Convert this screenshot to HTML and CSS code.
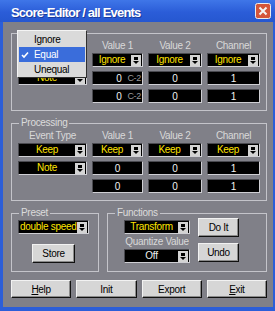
FILE: index.html
```html
<!DOCTYPE html>
<html lang="en">
<head>
    <meta charset="UTF-8">
    <title>Score-Editor / all Events</title>
    <link rel="stylesheet" href="styles.css">
</head>
<body>
<div class="window">

    <!-- Title bar -->
    <div class="titlebar">
        <span class="title">Score-Editor / all Events</span>
        <svg class="close" width="16" height="16" viewBox="0 0 16 16">
            <rect x="0.5" y="0.5" width="15" height="15" rx="2" fill="#d4553a" stroke="#ececec"/>
            <path d="M4.5 4.5 L11.5 11.5 M11.5 4.5 L4.5 11.5" stroke="#f4f4f4" stroke-width="2"/>
        </svg>
    </div>

    <div class="client">

        <!-- Filter (its legend and first column header sit under the open popup) -->
        <div class="group">
            <div class="matrix">
                <div class="cols heads">
                    <span></span>
                    <span>Value 1</span>
                    <span>Value 2</span>
                    <span>Channel</span>
                </div>
                <div class="cols rows">
                    <div class="select"><span class="val"></span><span class="arrow"><svg width="10" height="11" viewBox="0 0 10 11"><rect x="3" y="2" width="4" height="3"/><path d="M2 6 H8 L5 9 Z"/></svg></span></div>
                    <div class="select"><span class="val">Ignore</span><span class="arrow"><svg width="10" height="11" viewBox="0 0 10 11"><rect x="3" y="2" width="4" height="3"/><path d="M2 6 H8 L5 9 Z"/></svg></span></div>
                    <div class="select"><span class="val">Ignore</span><span class="arrow"><svg width="10" height="11" viewBox="0 0 10 11"><rect x="3" y="2" width="4" height="3"/><path d="M2 6 H8 L5 9 Z"/></svg></span></div>
                    <div class="select"><span class="val">Ignore</span><span class="arrow"><svg width="10" height="11" viewBox="0 0 10 11"><rect x="3" y="2" width="4" height="3"/><path d="M2 6 H8 L5 9 Z"/></svg></span></div>

                    <div class="select"><span class="val">Note</span><span class="arrow"><svg width="10" height="11" viewBox="0 0 10 11"><rect x="3" y="2" width="4" height="3"/><path d="M2 6 H8 L5 9 Z"/></svg></span></div>
                    <div class="field note"><span>0</span><span class="nn">C-2</span></div>
                    <div class="field">0</div>
                    <div class="field">1</div>

                    <span></span>
                    <div class="field note"><span>0</span><span class="nn">C-2</span></div>
                    <div class="field">0</div>
                    <div class="field">1</div>
                </div>
            </div>

            <!-- open popup of the condition list -->
            <div class="popup">
                <div class="item">Ignore</div>
                <div class="item on">
                    <svg class="check" width="8" height="8" viewBox="0 0 8 8"><path d="M1 4 L3 6 L7 1.5" fill="none" stroke="#fff" stroke-width="1.6"/></svg>
                    Equal
                </div>
                <div class="item">Unequal</div>
            </div>
        </div>

        <!-- Processing -->
        <div class="group processing">
            <span class="legend">Processing</span>
            <div class="matrix">
                <div class="cols heads">
                    <span>Event Type</span>
                    <span>Value 1</span>
                    <span>Value 2</span>
                    <span>Channel</span>
                </div>
                <div class="cols rows">
                    <div class="select"><span class="val">Keep</span><span class="arrow"><svg width="10" height="11" viewBox="0 0 10 11"><rect x="3" y="2" width="4" height="3"/><path d="M2 6 H8 L5 9 Z"/></svg></span></div>
                    <div class="select"><span class="val">Keep</span><span class="arrow"><svg width="10" height="11" viewBox="0 0 10 11"><rect x="3" y="2" width="4" height="3"/><path d="M2 6 H8 L5 9 Z"/></svg></span></div>
                    <div class="select"><span class="val">Keep</span><span class="arrow"><svg width="10" height="11" viewBox="0 0 10 11"><rect x="3" y="2" width="4" height="3"/><path d="M2 6 H8 L5 9 Z"/></svg></span></div>
                    <div class="select"><span class="val">Keep</span><span class="arrow"><svg width="10" height="11" viewBox="0 0 10 11"><rect x="3" y="2" width="4" height="3"/><path d="M2 6 H8 L5 9 Z"/></svg></span></div>

                    <div class="select"><span class="val">Note</span><span class="arrow"><svg width="10" height="11" viewBox="0 0 10 11"><rect x="3" y="2" width="4" height="3"/><path d="M2 6 H8 L5 9 Z"/></svg></span></div>
                    <div class="field">0</div>
                    <div class="field">0</div>
                    <div class="field">1</div>

                    <span></span>
                    <div class="field">0</div>
                    <div class="field">0</div>
                    <div class="field">1</div>
                </div>
            </div>
        </div>

        <!-- Preset + Functions -->
        <div class="bottom">
            <div class="group preset">
                <span class="legend">Preset</span>
                <div class="select left"><span class="val">double speed</span><span class="arrow"><svg width="10" height="11" viewBox="0 0 10 11"><rect x="3" y="2" width="4" height="3"/><path d="M2 6 H8 L5 9 Z"/></svg></span></div>
                <button class="btn store">Store</button>
            </div>

            <div class="group functions">
                <span class="legend">Functions</span>
                <div class="fcol">
                    <div class="select"><span class="val">Transform</span><span class="arrow"><svg width="10" height="11" viewBox="0 0 10 11"><rect x="3" y="2" width="4" height="3"/><path d="M2 6 H8 L5 9 Z"/></svg></span></div>
                    <span class="qlabel">Quantize Value</span>
                    <div class="select white"><span class="val">Off</span><span class="arrow"><svg width="10" height="11" viewBox="0 0 10 11"><rect x="3" y="2" width="4" height="3"/><path d="M2 6 H8 L5 9 Z"/></svg></span></div>
                </div>
                <div class="bcol">
                    <button class="btn small">Do It</button>
                    <button class="btn small">Undo</button>
                </div>
            </div>
        </div>

        <!-- Dialog buttons -->
        <div class="buttons">
            <button class="btn wide"><u>H</u>elp</button>
            <button class="btn wide">Init</button>
            <button class="btn wide">Export</button>
            <button class="btn wide"><u>E</u>xit</button>
        </div>
    </div>
</div>
</body>
</html>
```

FILE: styles.css
```css
body {
    margin: 0;
    font-family: "Liberation Sans", Arial, sans-serif;
    font-size: 10px;
    letter-spacing: -0.3px;
}

.window {
    width: 275px;
    height: 311px;
    display: flex;
    flex-direction: column;
    background: #808088;
}

/* Title bar */
.titlebar {
    height: 22px;
    flex: none;
    display: flex;
    align-items: center;
    justify-content: space-between;
    padding: 0 4px 0 11px;
    box-sizing: border-box;
    background: linear-gradient(#3f76e8, #2b5dd8 55%, #2657d0);
}

.title {
    color: #fff;
    font-weight: bold;
    font-size: 13px;
    letter-spacing: -0.8px;
    padding-top: 3px;
    text-shadow: 1px 1px 0 #1a3a9a;
}

.close {
    display: block;
}

.client {
    flex: 1;
    border: solid #2c5ed8;
    border-width: 0 2px 4px 3px;
    padding: 11px 6px 0 8px;
    display: flex;
    flex-direction: column;
}

/* Group boxes */
.group {
    position: relative;
    border: 1px solid #c4c4ca;
}

.legend {
    position: absolute;
    top: -7px;
    left: 7px;
    padding: 0 2px;
    line-height: 11px;
    background: #808088;
    color: #dcdcdc;
}

.processing {
    margin-top: 12px;
}

.matrix {
    padding: 6px 6px 7px;
}

.cols {
    display: grid;
    grid-template-columns: 69px 51px 54px 53px;
    column-gap: 5px;
}

.heads {
    height: 12px;
    margin-bottom: 1px;
}

.heads span {
    text-align: center;
    line-height: 12px;
    color: #d8d8d8;
}

.rows {
    grid-auto-rows: 14px;
    row-gap: 4px;
}

/* Drop-downs and value fields */
.select,
.field {
    box-sizing: border-box;
    height: 14px;
    background: #000;
    border: 1px solid;
    border-color: #4a4a50 #cfcfd4 #cfcfd4 #4a4a50;
    display: flex;
    align-items: center;
}

.select .val {
    flex: 1;
    text-align: center;
    color: #ffe400;
    overflow: hidden;
    white-space: nowrap;
    line-height: 12px;
}

.select.left .val {
    text-align: left;
    padding-left: 1px;
}

.select.white .val {
    color: #f0f0f0;
}

.arrow {
    flex: none;
    width: 10px;
    height: 11px;
    margin-right: 1px;
    background: #d4d4d4;
}

.arrow svg {
    display: block;
}

.field {
    justify-content: center;
    color: #f0f0f0;
}

.field.note {
    justify-content: flex-end;
    padding-right: 1px;
}

.field .nn {
    margin-left: 6px;
    font-size: 9px;
    color: #9a9a9a;
}

/* Open popup list */
.popup {
    position: absolute;
    left: 5px;
    top: -4px;
    width: 70px;
    box-sizing: border-box;
    padding: 1px 1px 0;
    background: #dadada;
    border: 1px solid;
    border-color: #f4f4f4 #303030 #303030 #f4f4f4;
}

.item {
    position: relative;
    height: 15px;
    line-height: 15px;
    padding-left: 15px;
    color: #000;
}

.item.on {
    background: #3a6ddb;
    color: #fff;
}

.check {
    position: absolute;
    left: 2px;
    top: 4px;
}

/* Preset / Functions */
.bottom {
    display: flex;
    gap: 8px;
    margin-top: 12px;
}

.preset {
    width: 88px;
    box-sizing: border-box;
    padding: 6px 0 8px 6px;
    display: flex;
    flex-direction: column;
    align-items: flex-start;
}

.preset .select {
    width: 71px;
}

.functions {
    flex: 1;
    padding: 4px 0 0 16px;
    display: flex;
    gap: 8px;
}

.fcol {
    width: 66px;
    padding-top: 2px;
    display: flex;
    flex-direction: column;
}

.qlabel {
    height: 15px;
    line-height: 15px;
    text-align: center;
    color: #d8d8d8;
    white-space: nowrap;
}

.bcol {
    display: flex;
    flex-direction: column;
    gap: 6px;
}

/* Buttons */
.btn {
    box-sizing: border-box;
    padding: 0;
    background: #d6d6d6;
    border: 1px solid;
    border-color: #f2f2f2 #101010 #101010 #f2f2f2;
    box-shadow: inset -1px -1px 0 #8a8a8a;
    font-family: "Liberation Sans", Arial, sans-serif;
    font-size: 10px;
    letter-spacing: -0.3px;
    color: #000;
}

.store {
    width: 43px;
    height: 19px;
    margin: 10px 0 0 14px;
}

.small {
    width: 41px;
    height: 19px;
}

.buttons {
    display: flex;
    gap: 5px;
    margin-top: 8px;
}

.wide {
    flex: 1;
    height: 18px;
}
```
